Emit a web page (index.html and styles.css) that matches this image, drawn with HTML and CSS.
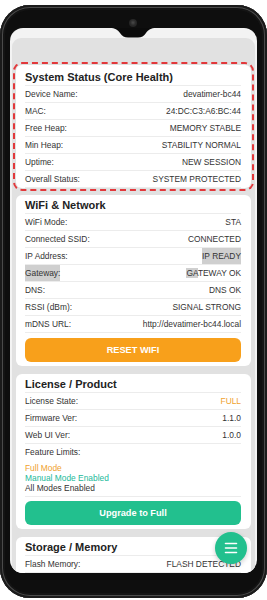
FILE: index.html
```html
<!DOCTYPE html>
<html>
<head>
<meta charset="utf-8">
<link rel="stylesheet" href="styles.css">
</head>
<body>
<div class="phone">
  <div class="screen">
    <div class="page">
      <section class="card card-focus">
        <h2 class="card-title">System Status (Core Health)</h2>
        <div class="row"><span>Device Name:</span><span>devatimer-bc44</span></div>
        <div class="row"><span>MAC:</span><span>24:DC:C3:A6:BC:44</span></div>
        <div class="row"><span>Free Heap:</span><span>MEMORY STABLE</span></div>
        <div class="row"><span>Min Heap:</span><span>STABILITY NORMAL</span></div>
        <div class="row"><span>Uptime:</span><span>NEW SESSION</span></div>
        <div class="row"><span>Overall Status:</span><span>SYSTEM PROTECTED</span></div>
      </section>

      <section class="card">
        <h2 class="card-title">WiFi &amp; Network</h2>
        <div class="row"><span>WiFi Mode:</span><span>STA</span></div>
        <div class="row"><span>Connected SSID:</span><span>CONNECTED</span></div>
        <div class="row"><span>IP Address:</span><span class="sel">IP READY</span></div>
        <div class="row"><span class="sel">Gateway:</span><span><span class="sel">GA</span>TEWAY OK</span></div>
        <div class="row"><span>DNS:</span><span>DNS OK</span></div>
        <div class="row"><span>RSSI (dBm):</span><span>SIGNAL STRONG</span></div>
        <div class="row"><span>mDNS URL:</span><span>http://devatimer-bc44.local</span></div>
        <button class="btn btn-orange">RESET WIFI</button>
      </section>

      <section class="card">
        <h2 class="card-title">License / Product</h2>
        <div class="row"><span>License State:</span><span class="orange">FULL</span></div>
        <div class="row"><span>Firmware Ver:</span><span>1.1.0</span></div>
        <div class="row"><span>Web UI Ver:</span><span>1.0.0</span></div>
        <div class="features">
          <div class="features-label">Feature Limits:</div>
          <ul class="features-list">
            <li class="orange">Full Mode</li>
            <li class="teal">Manual Mode Enabled</li>
            <li>All Modes Enabled</li>
          </ul>
        </div>
        <button class="btn btn-green">Upgrade to Full</button>
      </section>

      <section class="card">
        <h2 class="card-title">Storage / Memory</h2>
        <div class="row"><span>Flash Memory:</span><span>FLASH DETECTED</span></div>
      </section>
    </div>
    <button class="fab" aria-label="Menu">
      <svg width="14" height="12" viewBox="0 0 14 12"><path d="M1.5 1.5H12.5M1.5 6H12.5M1.5 10.5H12.5" stroke="#fff" stroke-width="1.6" stroke-linecap="round" fill="none"/></svg>
    </button>
  </div>
  <svg class="notch" width="46" height="10" viewBox="0 0 46 10"><path d="M0 0H46C41 0 38.5 1.5 36 5C34 8 31.5 9.5 28 9.5H18C14.5 9.5 12 8 10 5C7.5 1.5 5 0 0 0Z" fill="#0b0b0b"/></svg>
  <div class="camera"></div>
</div>
</body>
</html>
```
FILE: styles.css
```css
* { box-sizing: border-box; }
html, body { margin: 0; padding: 0; background: #fff; }
body { font-family: "Liberation Sans", Arial, sans-serif; }

.phone {
  position: relative;
  margin-top: 5px;
  width: 267px;
  height: 593px;
  border-radius: 30px;
  background: #0e0e0e;
  padding: 23px 10px 25px;
  box-shadow: inset 0 0 0 2px #1b1b1b, inset 0 0 0 3px #4b4b4b, inset 0 0 0 5px #141414;
}

.screen {
  position: relative;
  height: 545px;
  border-radius: 13px;
  overflow: hidden;
  background: #f3f3f3;
}

.page {
  margin: 10px 2px 0;
  padding: 27px 4px 0;
  background: #e1e1e1;
  border-radius: 9px 9px 0 0;
  min-height: 600px;
}

.card {
  background: #fff;
  border-radius: 6px;
  padding: 2px 10px 4px 9px;
  margin-bottom: 8px;
  color: #333;
}

.card-focus {
  outline: 2px dashed #e2383b;
  outline-offset: 1px;
  padding-top: 4px;
  padding-bottom: 0;
  margin-bottom: 7px;
}

.card-title {
  margin: 0;
  font-size: 11px;
  font-weight: bold;
  color: #222;
  height: 17px;
  line-height: 16px;
  border-bottom: 1px solid #ececec;
}

.row {
  display: flex;
  justify-content: space-between;
  height: 17px;
  line-height: 16px;
  font-size: 8.4px;
  border-bottom: 1px solid #ececec;
  white-space: nowrap;
}

.sel { background: #cfcfcf; }
.orange { color: #f0a22e; }
.teal { color: #22b99a; }

.features {
  font-size: 8.4px;
  padding-bottom: 3px;
  border-bottom: 1px solid #ececec;
}
.features-label { line-height: 16px; }
.features-list {
  list-style: none;
  margin: 3px 0 0;
  padding: 0;
  line-height: 10px;
}

.btn {
  display: block;
  width: 100%;
  height: 24px;
  margin-top: 4px;
  border: 0;
  border-radius: 6px;
  color: #fff;
  font-family: "Liberation Sans", Arial, sans-serif;
  font-weight: bold;
  font-size: 9.2px;
  padding: 0;
}
.btn-orange { background: #f8a01b; margin-top: 5px; }
.btn-green { background: #22c08e; }

.fab {
  position: absolute;
  right: 10px;
  bottom: 9px;
  width: 32px;
  height: 32px;
  border-radius: 50%;
  border: 0;
  padding: 0;
  background: #22c08e;
  box-shadow: 0 2px 5px rgba(0,0,0,0.2);
  display: flex;
  align-items: center;
  justify-content: center;
}

.notch {
  position: absolute;
  left: 110px;
  top: 23px;
}
.camera {
  position: absolute;
  left: 129px;
  top: 14px;
  width: 8px;
  height: 8px;
  border-radius: 50%;
  background: radial-gradient(circle at 50% 45%, #4a4a4a 0, #2a2a2a 45%, #1a1a1a 100%);
}
```
